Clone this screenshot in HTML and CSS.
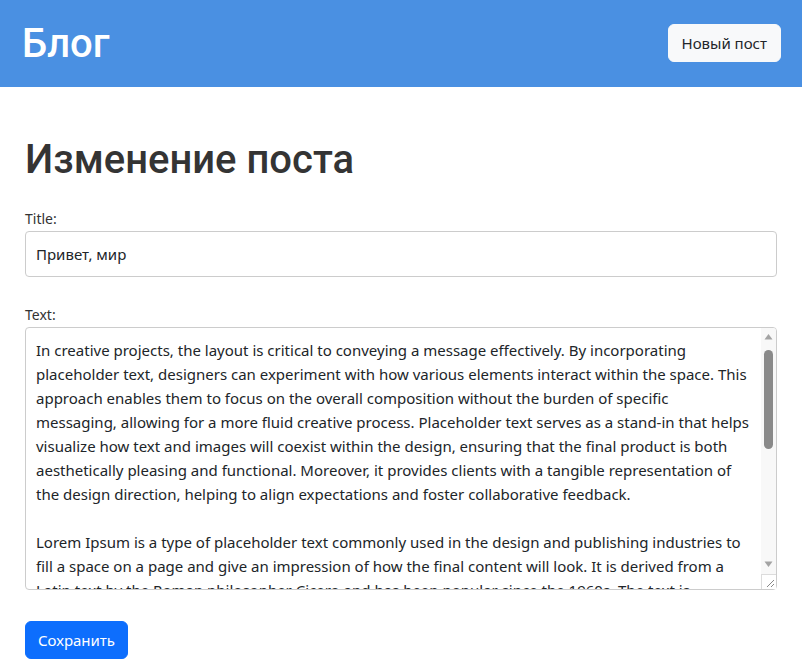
FILE: index.html
```html
<!DOCTYPE html>
<html lang="ru">
<head>
<meta charset="utf-8">
<title>Блог</title>
<link rel="stylesheet" href="styles.css">
</head>
<body>
<header class="topbar">
  <div class="brand">Блог</div>
  <button class="btn-light" type="button">Новый пост</button>
</header>
<main class="content">
  <h1 class="page-title">Изменение поста</h1>
  <form class="post-form">
    <div class="field">
      <label class="field-label" for="title">Title:</label>
      <input class="input" id="title" type="text" value="Привет, мир">
    </div>
    <div class="field field-text">
      <label class="field-label" for="text">Text:</label>
      <div class="textarea-wrap">
        <textarea class="textarea" id="text">In creative projects, the layout is critical to conveying a message effectively. By incorporating placeholder text, designers can experiment with how various elements interact within the space. This approach enables them to focus on the overall composition without the burden of specific messaging, allowing for a more fluid creative process. Placeholder text serves as a stand-in that helps visualize how text and images will coexist within the design, ensuring that the final product is both aesthetically pleasing and functional. Moreover, it provides clients with a tangible representation of the design direction, helping to align expectations and foster collaborative feedback.

Lorem Ipsum is a type of placeholder text commonly used in the design and publishing industries to fill a space on a page and give an impression of how the final content will look. It is derived from a Latin text by the Roman philosopher Cicero and has been popular since the 1960s. The text is intentionally nonsensical, allowing viewers to focus on the visual elements rather than the content itself. Designers use it to test typography, spacing and layout before the real copy is ready.</textarea>
        <div class="scrollbar" aria-hidden="true">
          <svg class="arrow" width="15" height="17" viewBox="0 0 15 17"><path d="M3.5 11.5 L7.5 6 L11.5 11.5 Z" fill="#a3a3a3"/></svg>
          <div class="track"><div class="thumb"></div></div>
          <svg class="arrow" width="15" height="17" viewBox="0 0 15 17"><path d="M3.5 5.5 L7.5 11 L11.5 5.5 Z" fill="#a3a3a3"/></svg>
          <div class="resizer">
            <svg width="15" height="15" viewBox="0 0 15 15"><path d="M6 13 L13 6 M10 13 L13 10" stroke="#888" stroke-width="1"/></svg>
          </div>
        </div>
      </div>
    </div>
    <button class="btn-primary" type="submit">Сохранить</button>
  </form>
</main>
</body>
</html>
```

FILE: styles.css
```css
* { box-sizing: border-box; }
html, body { margin: 0; padding: 0; background: #fff; }
body {
  font-family: "Noto Sans", "Open Sans", sans-serif;
  color: #212529;
  font-size: 16px;
}
.topbar {
  height: 87px;
  background: #4a90e2;
  display: flex;
  align-items: center;
  justify-content: space-between;
  padding: 0 21px 0 22px;
}
.brand {
  font-family: Roboto, "Noto Sans", sans-serif;
  font-weight: 500;
  font-size: 40px;
  color: #fff;
  line-height: 1;
}
.btn-light {
  font-family: "Noto Sans", sans-serif;
  font-size: 15px;
  background: #f8f9fa;
  color: #212529;
  border: 1px solid #f8f9fa;
  border-radius: 6px;
  height: 38px;
  padding: 0 13px;
  margin-bottom: 1px;
}
.content {
  padding: 49px 25px 0 25px;
}
.page-title {
  font-family: Roboto, "Noto Sans", sans-serif;
  font-weight: 500;
  font-size: 40px;
  line-height: 48px;
  color: #343434;
  margin: 0 0 25px 0;
}
.field { margin-bottom: 28px; }
.field-label {
  display: block;
  font-size: 14px;
  line-height: 20px;
  color: #333;
  margin-bottom: 2px;
}
.input {
  display: block;
  width: 100%;
  height: 46px;
  border: 1px solid #ccc;
  border-radius: 4px;
  padding: 0 10px;
  font-family: "Noto Sans", sans-serif;
  font-size: 15px;
  color: #212529;
  background: #fff;
}
.textarea-wrap {
  position: relative;
}
.textarea {
  display: block;
  width: 100%;
  height: 263px;
  border: 1px solid #ccc;
  border-radius: 4px;
  padding: 10px 26px 10px 10px;
  font-family: "Noto Sans", sans-serif;
  font-size: 15px;
  line-height: 24px;
  color: #212529;
  resize: none;
  overflow: hidden;
  background: #fff;
}
.scrollbar {
  position: absolute;
  top: 1px;
  right: 1px;
  bottom: 1px;
  width: 15px;
  background: #f8f8f8;
  display: flex;
  flex-direction: column;
  border-top-right-radius: 3px;
  border-bottom-right-radius: 3px;
}
.arrow { display: block; flex: none; }
.track {
  flex: 1;
  padding: 5px 3px 0 3px;
}
.thumb {
  width: 9px;
  height: 99px;
  background: #8a8a8a;
  border-radius: 5px;
}
.resizer {
  flex: none;
  width: 15px;
  height: 15px;
  border-top: 1px solid #dcdcdc;
  border-left: 1px solid #dcdcdc;
  background: #fff;
  margin-top: 1px;
  position: relative;
}
.resizer svg {
  position: absolute;
  left: -1px;
  top: -1px;
}
.btn-primary {
  font-family: "Noto Sans", sans-serif;
  font-size: 15px;
  background: #0d6efd;
  color: #fff;
  border: 1px solid #0d6efd;
  border-radius: 6px;
  height: 38px;
  padding: 0 12px;
  margin-top: 3px;
}
```
